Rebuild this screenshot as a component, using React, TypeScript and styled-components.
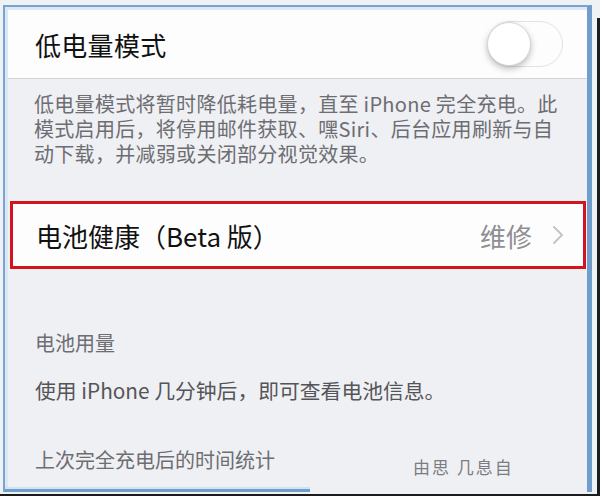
import React from "react";
import styled, { createGlobalStyle } from "styled-components";

const Global = createGlobalStyle`
  html, body { margin: 0; padding: 0; background: #f3f5f7; }
  body { font-family: "Noto Sans CJK SC", "Noto Sans", sans-serif; }
`;

const Page = styled.div`
  position: relative;
  width: 600px;
  height: 496px;
  box-sizing: border-box;
  overflow: hidden;
  background: #eef2f5;
  border-bottom: 2px solid #1c1c1c;
  padding: 5px 8px 0 3px;
  &::after {
    content: "";
    position: absolute;
    right: 0;
    top: 18px;
    bottom: 0;
    width: 3px;
    background: #1c1c1c;
  }
`;

const Frame = styled.div`
  position: relative;
  height: 487px;
  box-sizing: border-box;
  border-top: 2px solid #7aa4cf;
  border-left: 2px solid #7aa4cf;
  border-right: 5px solid #6f9dcc;
  padding: 3px 0 0 3px;
  background: #d9e8f2;
  overflow: hidden;
  &::after {
    content: "";
    position: absolute;
    left: 0;
    bottom: 0;
    width: 305px;
    height: 3px;
    background: #6f9dcc;
    box-shadow: 0 -2px 0 #cfe4ee;
  }
`;

const Inner = styled.div`
  height: 100%;
  background: #eff0f4;
  display: flex;
  flex-direction: column;
  & > * { flex-shrink: 0; }
`;

const SwitchRow = styled.div`
  height: 68px;
  background: #fdfdfd;
  border-bottom: 1px solid #d3d3d8;
  display: flex;
  align-items: center;
  justify-content: space-between;
  padding: 0 24px 0 27px;
`;

const Title = styled.span`
  font-size: 26px;
  color: #111;
  letter-spacing: 0.3px;
`;

const Track = styled.div<{ $on?: boolean }>`
  width: 76px;
  height: 46px;
  box-sizing: border-box;
  border-radius: 23px;
  border: 1.5px solid #e2e2e6;
  background: ${(p) => (p.$on ? "#4cd964" : "#fdfdfd")};
  display: flex;
  align-items: center;
`;

const Knob = styled.div`
  width: 44px;
  height: 44px;
  border-radius: 50%;
  background: #fff;
  border: 1px solid #d6d6d6;
  box-sizing: border-box;
  box-shadow: 0 3px 6px rgba(0, 0, 0, 0.25);
  margin-left: -1px;
`;

const Footnote = styled.p`
  margin: 0;
  padding: 12px 0 0 26px;
  font-size: 20px;
  line-height: 25px;
  letter-spacing: 0.3px;
  color: #6d6d72;
  white-space: nowrap;
`;

const NavRow = styled.div`
  margin: 35px 1px 0 2px;
  height: 68px;
  box-sizing: border-box;
  border: 3px solid #d2141e;
  background: #fdfdfd;
  display: flex;
  align-items: center;
  padding: 0 19px 0 23px;
`;

const NavLabel = styled.span`
  font-size: 26px;
  color: #111;
  flex: 1;
  white-space: nowrap;
`;

const NavValue = styled.span`
  font-size: 26px;
  color: #8e8e93;
  margin-right: 20px;
`;

const Chevron = styled.svg`
  width: 12px;
  height: 20px;
`;

const Caption = styled.div<{ $gap: number; $dark?: boolean }>`
  margin-top: ${(p) => p.$gap}px;
  padding-left: 27px;
  font-size: ${(p) => (p.$dark ? "20.8px" : "20px")};
  line-height: 24px;
  color: ${(p) => (p.$dark ? "#555558" : "#6d6d72")};
  white-space: nowrap;
`;

const StatsRow = styled.div`
  margin-top: 46px;
  padding-left: 27px;
  display: flex;
  align-items: flex-start;
  gap: 138px;
`;

const StatsLabel = styled.span`
  font-size: 20px;
  line-height: 24px;
  color: #6d6d72;
  white-space: nowrap;
`;

const Ghost = styled.span`
  margin-top: 9px;
  font-size: 17px;
  line-height: 20px;
  color: #7c7c80;
  letter-spacing: 2px;
  white-space: nowrap;
`;

export default function App() {
  return (
    <>
      <Global />
      <Page>
        <Frame>
          <Inner>
            <SwitchRow>
              <Title>低电量模式</Title>
              <Track>
                <Knob />
              </Track>
            </SwitchRow>
            <Footnote>
              低电量模式将暂时降低耗电量，直至 iPhone 完全充电。此
              <br />
              模式启用后，将停用邮件获取、嘿Siri、后台应用刷新与自
              <br />
              动下载，并减弱或关闭部分视觉效果。
            </Footnote>
            <NavRow>
              <NavLabel>电池健康（Beta 版）</NavLabel>
              <NavValue>维修</NavValue>
              <Chevron viewBox="0 0 12 20">
                <path
                  d="M2 2 L10 10 L2 18"
                  fill="none"
                  stroke="#c4c4c9"
                  strokeWidth="2"
                  strokeLinecap="round"
                  strokeLinejoin="round"
                />
              </Chevron>
            </NavRow>
            <Caption $gap={62}>电池用量</Caption>
            <Caption $gap={23} $dark>
              使用 iPhone 几分钟后，即可查看电池信息。
            </Caption>
            <StatsRow>
              <StatsLabel>上次完全充电后的时间统计</StatsLabel>
              <Ghost>由思 几息自</Ghost>
            </StatsRow>
          </Inner>
        </Frame>
      </Page>
    </>
  );
}
